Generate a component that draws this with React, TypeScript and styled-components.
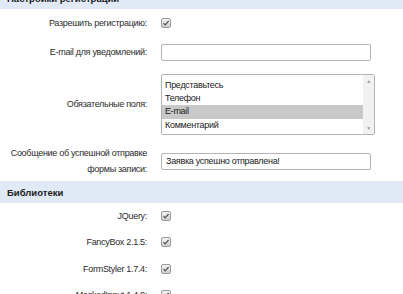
import React from "react";
import styled, { createGlobalStyle } from "styled-components";

const GlobalStyle = createGlobalStyle`
    html, body {
        margin: 0;
        padding: 0;
        background: #ffffff;
        overflow: hidden;
    }
    body {
        font-family: "Liberation Sans", Arial, sans-serif;
        font-size: 9px;
        letter-spacing: -0.3px;
        color: #333333;
    }
`;

interface RowProps {
    $h: number;
}

interface ItemProps {
    $selected?: boolean;
}

const Page = styled.div`
    width: 403px;
    margin-top: -13px;
    display: flex;
    flex-direction: column;
`;

const SectionHeader = styled.header`
    height: 22px;
    padding: 0 7px;
    display: flex;
    align-items: center;
    background-color: #dfeaf6;
    font-weight: bold;
    font-size: 9.5px;
    letter-spacing: 0;
    color: #222222;
`;

const Row = styled.div<RowProps>`
    min-height: ${({ $h }) => $h}px;
    display: grid;
    grid-template-columns: 147px 1fr;
    column-gap: 14px;
    align-items: center;
`;

const Label = styled.label`
    text-align: right;
    line-height: 16px;
    color: #2b2b2b;
    white-space: nowrap;
`;

const Checkbox = styled.span`
    width: 10px;
    height: 10px;
    box-sizing: border-box;
    border: 1px solid #9a9a9a;
    border-radius: 2px;
    background: linear-gradient(#f4f4f4, #cfcfcf);
    display: flex;
    align-items: center;
    justify-content: center;
`;

const TextInput = styled.div`
    width: 210px;
    height: 17px;
    box-sizing: border-box;
    border: 1px solid #b4b4b4;
    border-radius: 2px;
    padding: 0 4px;
    display: flex;
    align-items: center;
    background: #ffffff;
    color: #222222;
`;

const ListBox = styled.div`
    width: 214px;
    height: 61px;
    box-sizing: border-box;
    border: 1px solid #b4b4b4;
    border-radius: 2px;
    display: flex;
    background: #ffffff;
`;

const Options = styled.ul`
    flex: 1;
    margin: 0;
    padding: 4px 0 0;
    list-style: none;
`;

const Option = styled.li<ItemProps>`
    height: 13.4px;
    line-height: 13.4px;
    padding-left: 3px;
    color: #222222;
    background: ${({ $selected }) => ($selected ? "#c8c8c8" : "transparent")};
`;

const ScrollBar = styled.div`
    width: 11px;
    background: #f1f1f1;
    display: flex;
    flex-direction: column;
    justify-content: space-between;
    align-items: center;
    padding: 4px 0 3px;
    color: #a0a0a0;
    font-size: 5px;
    line-height: 5px;
`;

const Check = () => (
    <svg width="8" height="8" viewBox="0 0 8 8">
        <path d="M1.5 4.2 L3.2 5.8 L6.6 2" fill="none" stroke="#555" strokeWidth="1.2" />
    </svg>
);

const libraries = [
    { name: "JQuery:", h: 26 },
    { name: "FancyBox 2.1.5:", h: 26 },
    { name: "FormStyler 1.7.4:", h: 27 },
    { name: "MaskedInput 1.4.0:", h: 26 },
];

const fields = ["Представьтесь", "Телефон", "E-mail", "Комментарий"];

export default function App() {
    return (
        <>
            <GlobalStyle />
            <Page>
                <SectionHeader>Настройки регистрации</SectionHeader>
                <Row $h={28}>
                    <Label>Разрешить регистрацию:</Label>
                    <Checkbox><Check /></Checkbox>
                </Row>
                <Row $h={30}>
                    <Label>E-mail для уведомлений:</Label>
                    <TextInput />
                </Row>
                <Row $h={74}>
                    <Label>Обязательные поля:</Label>
                    <ListBox>
                        <Options>
                            {fields.map((f) => (
                                <Option key={f} $selected={f === "E-mail"}>{f}</Option>
                            ))}
                        </Options>
                        <ScrollBar>
                            <span>▲</span>
                            <span>▼</span>
                        </ScrollBar>
                    </ListBox>
                </Row>
                <Row $h={40}>
                    <Label>Сообщение об успешной отправке<br />формы записи:</Label>
                    <TextInput>Заявка успешно отправлена!</TextInput>
                </Row>
                <SectionHeader>Библиотеки</SectionHeader>
                {libraries.map((lib) => (
                    <Row key={lib.name} $h={lib.h}>
                        <Label>{lib.name}</Label>
                        <Checkbox><Check /></Checkbox>
                    </Row>
                ))}
            </Page>
        </>
    );
}
